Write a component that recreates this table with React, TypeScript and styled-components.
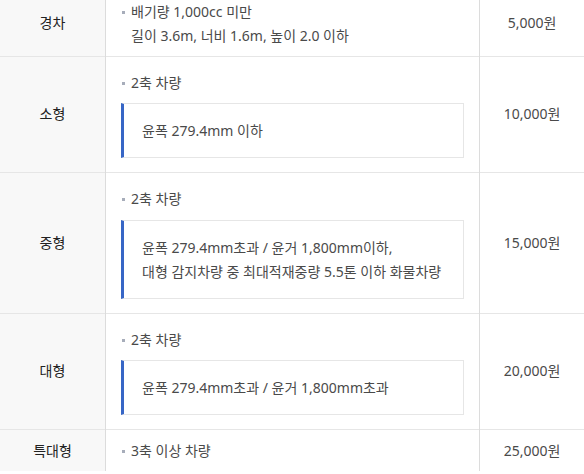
import React from 'react'
import styled, { createGlobalStyle } from 'styled-components'

const GlobalStyle = createGlobalStyle`
  html, body {
    margin: 0;
    padding: 0;
    background: #fff;
  }
  body {
    font-family: "Noto Sans", "Noto Sans CJK KR", sans-serif;
    color: #333;
    overflow: hidden;
  }
`

const StyledWrap = styled.div`
  width: 584px;
  margin-top: -10px;
`

const StyledTable = styled.table`
  width: 100%;
  border-collapse: collapse;
  table-layout: fixed;
  font-size: 14px;
  line-height: 1.7;
`

const StyledRow = styled.tr`
  border-top: 1px solid #e6e6e6;
  border-bottom: 1px solid #e6e6e6;

  &:last-child {
    border-bottom: none;
  }
`

const StyledLabel = styled.th`
  width: 105px;
  background: #f8f8f8;
  border-right: 1px solid #dcdcdc;
  color: #222;
  font-weight: 400;
  text-align: center;
  vertical-align: middle;
  padding: 0;
`

const StyledDesc = styled.td<{ $boxed?: boolean }>`
  padding: ${p => (p.$boxed ? '14px 15px' : '9px 15px 8px')};
  vertical-align: top;
  color: #4a4a4a;
`

const StyledPrice = styled.td`
  width: 104px;
  border-left: 1px solid #dcdcdc;
  color: #4a4a4a;
  text-align: center;
  vertical-align: middle;
  padding: 0;
`

const StyledList = styled.ul`
  list-style: none;
  margin: 0;
  padding: 0;
`

const StyledItem = styled.li`
  position: relative;
  padding-left: 10px;

  &::before {
    content: '';
    position: absolute;
    left: 1px;
    top: 11px;
    width: 3px;
    height: 3px;
    background: #a7adba;
  }
`

const StyledBox = styled.div`
  margin-top: 9px;
  border: 1px solid #e6e6e6;
  border-left: 3px solid #3766c6;
  padding: 15px 18px 14px;
  color: #4a4a4a;
`

type Fee = {
  label: string
  items: React.ReactNode
  box?: React.ReactNode
  price: string
}

const fees: Fee[] = [
  {
    label: '경차',
    items: (
      <>
        배기량 1,000cc 미만
        <br />
        길이 3.6m, 너비 1.6m, 높이 2.0 이하
      </>
    ),
    price: '5,000원',
  },
  { label: '소형', items: '2축 차량', box: '윤폭 279.4mm 이하', price: '10,000원' },
  {
    label: '중형',
    items: '2축 차량',
    box: (
      <>
        윤폭 279.4mm초과 / 윤거 1,800mm이하,
        <br />
        대형 감지차량 중 최대적재중량 5.5톤 이하 화물차량
      </>
    ),
    price: '15,000원',
  },
  { label: '대형', items: '2축 차량', box: '윤폭 279.4mm초과 / 윤거 1,800mm초과', price: '20,000원' },
  { label: '특대형', items: '3축 이상 차량', price: '25,000원' },
]

const FeeRow = ({ fee }: { fee: Fee }) => (
  <StyledRow>
    <StyledLabel scope="row">{fee.label}</StyledLabel>
    <StyledDesc $boxed={!!fee.box}>
      <StyledList>
        <StyledItem>{fee.items}</StyledItem>
      </StyledList>
      {fee.box && <StyledBox>{fee.box}</StyledBox>}
    </StyledDesc>
    <StyledPrice>{fee.price}</StyledPrice>
  </StyledRow>
)

const App = () => (
  <>
    <GlobalStyle />
    <StyledWrap>
      <StyledTable>
        <tbody>
          {fees.map(fee => (
            <FeeRow key={fee.label} fee={fee} />
          ))}
        </tbody>
      </StyledTable>
    </StyledWrap>
  </>
)

export default App
